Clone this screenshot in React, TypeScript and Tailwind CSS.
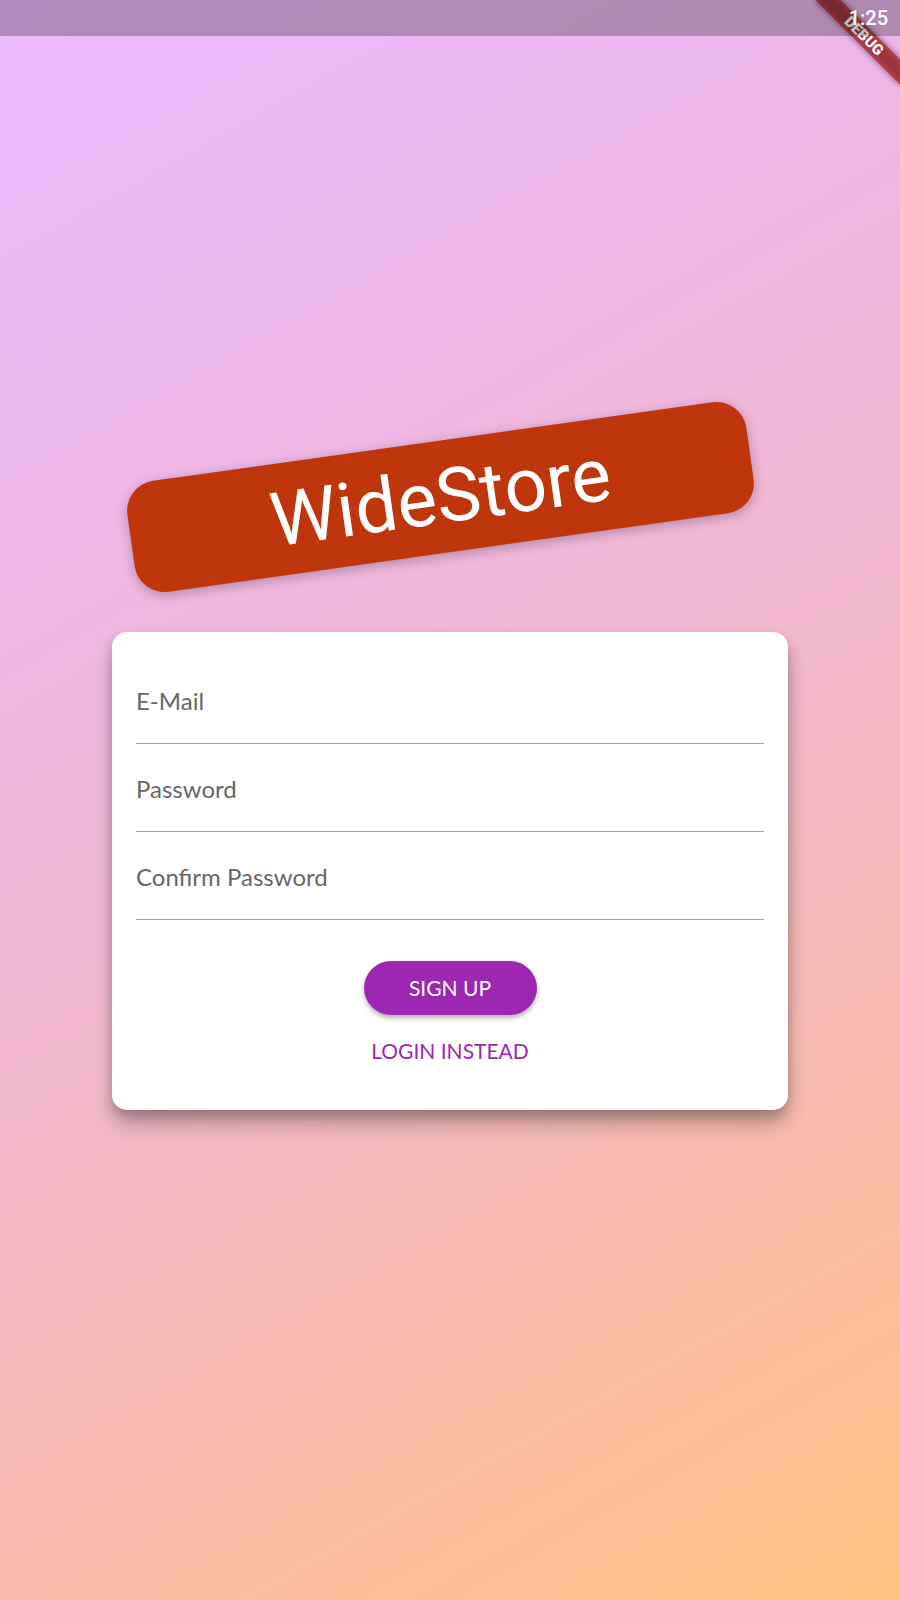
import React from "react";

function Field({ label }: { label: string }) {
  return (
    <div className="h-[88px] pt-[30px] border-b-[1.5px] border-[#a3a3a3]">
      <div className="text-[24px] leading-[29px] text-[#666666]">{label}</div>
    </div>
  );
}

export default function App() {
  return (
    <div
      className="relative w-full h-[1600px] overflow-hidden bg-white bg-[linear-gradient(150.64deg,rgba(215,117,255,0.5)_0%,rgba(225,135,220,0.6)_25%,rgba(235,152,186,0.7)_50%,rgba(245,170,151,0.8)_75%,rgba(255,188,117,0.9)_100%)]"
      style={{ fontFamily: "Lato, 'Noto Sans', sans-serif" }}
    >
      {/* Content */}
      <div className="flex flex-col items-center">
        <div className="mt-[441px] w-[625px] h-[112px] flex items-center justify-center rounded-[30px] bg-[#BF360C] translate-x-[-10px] rotate-[-8deg] shadow-[0_3px_12px_rgba(0,0,0,0.26)]">
          <span
            className="text-white text-[75px] leading-[88px]"
            style={{ fontFamily: "Roboto, 'Liberation Sans', sans-serif" }}
          >
            WideStore
          </span>
        </div>

        <div className="mt-[79px] w-[676px] rounded-[15px] bg-white px-6 pt-6 pb-[32px] shadow-[0_14px_20px_-2px_rgba(0,0,0,0.3),0_4px_10px_rgba(0,0,0,0.14)]">
          <Field label="E-Mail" />
          <Field label="Password" />
          <Field label="Confirm Password" />
          <div className="flex flex-col items-center">
            <button className="mt-[41px] h-[54px] w-[173px] rounded-full bg-[#9C27B0] text-white text-[21px] shadow-[0_3px_5px_rgba(0,0,0,0.3)] flex items-center justify-center">
              SIGN UP
            </button>
            <div className="mt-[9px] h-[54px] flex items-center justify-center text-[21px] text-[#9C27B0]">
              LOGIN INSTEAD
            </div>
          </div>
        </div>
      </div>

      {/* Debug banner shadow */}
      <div className="absolute left-[804px] top-[27px] w-[120px] h-[18px] rotate-45 bg-black/50 blur-[3px]" />
      {/* Debug banner */}
      <div className="absolute left-[804px] top-[27px] w-[120px] h-[18px] rotate-45 bg-[rgba(183,28,28,0.63)] flex items-center justify-center">
        <span
          className="text-white text-[15px] leading-[15px] font-black"
          style={{ fontFamily: "Roboto, 'Liberation Sans', sans-serif" }}
        >
          DEBUG
        </span>
      </div>

      {/* Status bar */}
      <div className="absolute top-0 left-0 right-0 h-[36px] bg-black/25 flex items-center justify-end pr-[12px]">
        <span
          className="text-white text-[20px] font-medium leading-none"
          style={{ fontFamily: "Roboto, 'Liberation Sans', sans-serif" }}
        >
          1:25
        </span>
      </div>
    </div>
  );
}
